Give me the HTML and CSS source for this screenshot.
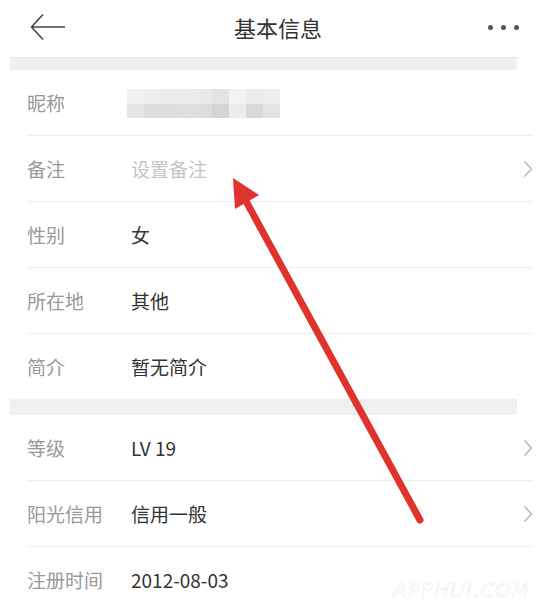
FILE: index.html
```html
<!DOCTYPE html>
<html lang="zh-CN">
<head>
  <meta charset="UTF-8">
  <meta name="viewport" content="width=device-width, initial-scale=1.0">
  <link rel="stylesheet" href="styles.css">
  <title>基本信息</title>
</head>
<body>
  <div class="page">
    <!-- 顶部标题栏 -->
    <div class="header">
      <svg class="back" width="36" height="28" viewBox="0 0 36 28">
        <path d="M13 1.5 L1.5 14 L13 26.5 M1.5 14 H35" fill="none" stroke="#444" stroke-width="1.6" stroke-linejoin="round"/>
      </svg>
      <div class="title">基本信息</div>
      <div class="more">
        <span class="dot"></span><span class="dot"></span><span class="dot"></span>
      </div>
    </div>

    <div class="band"></div>

    <div class="group">
      <div class="row">
        <div class="inner">
          <span class="label">昵称</span>
          <span class="value">
            <span class="mosaic">
              <i style="background:#f0f0f0"></i><i style="background:#eeeeee"></i><i style="background:#ebebeb"></i><i style="background:#ececec"></i><i style="background:#e9e9e9"></i><i style="background:#e2e2e2"></i><i style="background:#f2f2f2"></i><i style="background:#ebebeb"></i><i style="background:#efefef"></i>
              <i style="background:#e4e4e4"></i><i style="background:#dcdcdc"></i><i style="background:#dcdcdc"></i><i style="background:#dedede"></i><i style="background:#dcdcdc"></i><i style="background:#d2d2d2"></i><i style="background:#ebebeb"></i><i style="background:#d8d8d8"></i><i style="background:#e2e2e2"></i>
            </span>
          </span>
        </div>
      </div>
      <div class="row">
        <div class="inner">
          <span class="label">备注</span>
          <span class="value placeholder">设置备注</span>
          <svg class="chevron" width="10" height="18" viewBox="0 0 10 18"><path d="M1.5 1.5 L8.5 9 L1.5 16.5" fill="none" stroke="#b5b5b5" stroke-width="1.4"/></svg>
        </div>
      </div>
      <div class="row">
        <div class="inner">
          <span class="label">性别</span>
          <span class="value">女</span>
        </div>
      </div>
      <div class="row">
        <div class="inner">
          <span class="label">所在地</span>
          <span class="value">其他</span>
        </div>
      </div>
      <div class="row">
        <div class="inner last">
          <span class="label">简介</span>
          <span class="value">暂无简介</span>
        </div>
      </div>
    </div>

    <div class="band band-mid"></div>

    <div class="group">
      <div class="row">
        <div class="inner">
          <span class="label">等级</span>
          <span class="value">LV 19</span>
          <svg class="chevron" width="10" height="18" viewBox="0 0 10 18"><path d="M1.5 1.5 L8.5 9 L1.5 16.5" fill="none" stroke="#b5b5b5" stroke-width="1.4"/></svg>
        </div>
      </div>
      <div class="row">
        <div class="inner">
          <span class="label">阳光信用</span>
          <span class="value">信用一般</span>
          <svg class="chevron" width="10" height="18" viewBox="0 0 10 18"><path d="M1.5 1.5 L8.5 9 L1.5 16.5" fill="none" stroke="#b5b5b5" stroke-width="1.4"/></svg>
        </div>
      </div>
      <div class="row">
        <div class="inner last">
          <span class="label">注册时间</span>
          <span class="value">2012-08-03</span>
        </div>
      </div>
    </div>

    <!-- 红色箭头标注 -->
    <svg class="arrow" width="536" height="610" viewBox="0 0 536 610">
      <line x1="420" y1="520" x2="247" y2="203" stroke="#e0332d" stroke-width="7" stroke-linecap="round"/>
      <polygon points="233,178 259,195 235,209" fill="#e0332d"/>
    </svg>

    <div class="watermark">APPHUI.COM</div>
  </div>
</body>
</html>
```

FILE: styles.css
```css
body {
  margin: 0;
  background: #ffffff;
  font-family: "Noto Sans CJK SC", "Noto Sans", sans-serif;
}

.page {
  position: relative;
  width: 536px;
  height: 610px;
  overflow: hidden;
  background: #ffffff;
}

.header {
  display: flex;
  align-items: center;
  height: 57px;
  padding: 0 12px 0 30px;
}

.back {
  display: block;
  margin-top: -3px;
}

.title {
  flex: 1;
  text-align: center;
  font-size: 22px;
  color: #333333;
  padding-left: 2px;
  margin-top: -4px;
}

.more {
  display: flex;
  gap: 8px;
  width: 36px;
  margin-top: -3px;
}

.dot {
  width: 5px;
  height: 5px;
  border-radius: 50%;
  background: #555555;
}

.band {
  height: 12px;
  margin: 0 19px 0 10px;
  background: #f0f0f0;
  border-top: 1px solid #e6e6e6;
}

.band-mid {
  height: 16px;
  border-top: none;
}

.row {
  padding-left: 27px;
  padding-right: 3px;
}

.inner {
  display: flex;
  align-items: center;
  height: 65px;
  border-bottom: 1px solid #eeeeee;
}

.inner.last {
  border-bottom: none;
}

.label {
  width: 104px;
  font-size: 19px;
  color: #999999;
}

.value {
  flex: 1;
  font-size: 19px;
  color: #333333;
}

.placeholder {
  color: #c4c4c4;
}

.chevron {
  display: block;
  margin-top: 1px;
}

.mosaic {
  display: grid;
  grid-template-columns: repeat(9, 17px);
  grid-template-rows: 15px 14px;
  width: 151px;
  margin-left: -4px;
  margin-top: 1px;
  opacity: 0.95;
}

.mosaic i {
  display: block;
}

.arrow {
  position: absolute;
  top: 0;
  left: 0;
  pointer-events: none;
}

.watermark {
  position: absolute;
  right: 6px;
  bottom: 8px;
  font-family: "DejaVu Sans", sans-serif;
  font-size: 20px;
  font-style: italic;
  letter-spacing: 1px;
  color: #ffffff;
  -webkit-text-stroke: 0.5px #ececec;
}
```
